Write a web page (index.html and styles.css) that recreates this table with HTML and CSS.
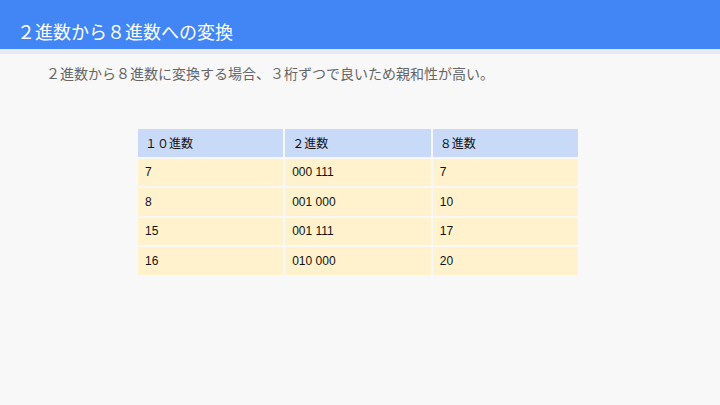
FILE: index.html
```html
<!DOCTYPE html>
<html lang="ja">
<head>
    <meta charset="UTF-8">
    <title>２進数から８進数への変換</title>
    <link rel="stylesheet" href="styles.css">
</head>
<body>
    <div class="header">
        <h1>２進数から８進数への変換</h1>
    </div>
    <div class="band"></div>

    <p class="lead">２進数から８進数に変換する場合、３桁ずつで良いため親和性が高い。</p>

    <table class="conv">
        <thead>
            <tr><th>１０進数</th><th>２進数</th><th>８進数</th></tr>
        </thead>
        <tbody>
            <tr><td>7</td><td>000 111</td><td>7</td></tr>
            <tr><td>8</td><td>001 000</td><td>10</td></tr>
            <tr><td>15</td><td>001 111</td><td>17</td></tr>
            <tr><td>16</td><td>010 000</td><td>20</td></tr>
        </tbody>
    </table>
</body>
</html>
```

FILE: styles.css
```css
body {
    margin: 0;
    width: 720px;
    height: 405px;
    overflow: hidden;
    background-color: #f8f8f9;
    font-family: "Liberation Sans", "Noto Sans CJK JP", sans-serif;
}
.header {
    background-color: #4285f4;
    height: 49px;
    display: flex;
    align-items: flex-end;
}
h1 {
    margin: 0 0 5px 17px;
    color: #fff;
    font-size: 18px;
    font-weight: normal;
    line-height: 26px;
    font-family: "Noto Sans CJK JP", sans-serif;
}
.band {
    height: 5px;
    background-color: #e6ebf3;
}
.lead {
    margin: 10px 0 0 46px;
    font-size: 14px;
    line-height: 18px;
    color: #666;
    font-family: "Noto Sans CJK JP", sans-serif;
}
.conv {
    margin: 45px 0 0 136px;
    border-collapse: separate;
    border-spacing: 2px;
    width: 444px;
}
.conv th, .conv td {
    text-align: left;
    padding: 0 0 0 7px;
    height: 27.5px;
    color: #111;
    width: 146px;
}
.conv th {
    background-color: #c9daf8;
    font-weight: normal;
    font-size: 12px;
}
.conv td {
    background-color: #fff2cc;
    font-size: 12px;
}
```
